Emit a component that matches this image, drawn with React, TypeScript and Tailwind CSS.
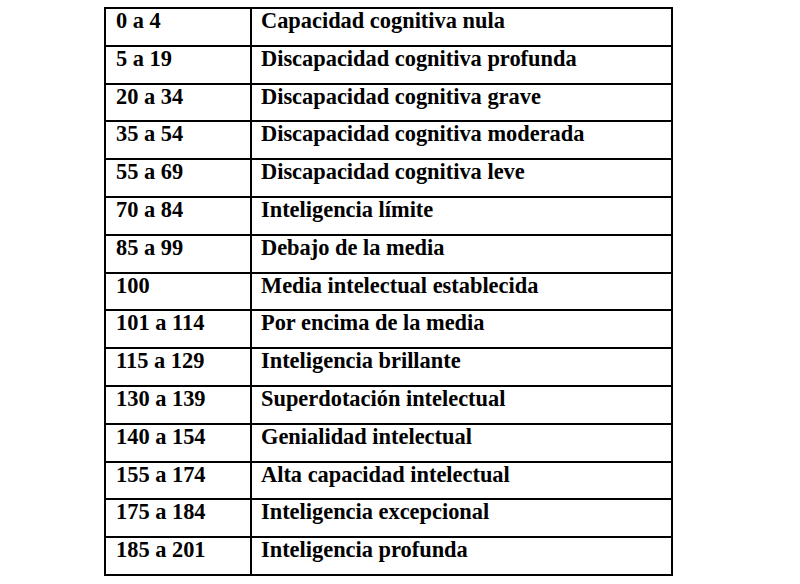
const rows: [string, string][] = [
  ["0 a 4", "Capacidad cognitiva nula"],
  ["5 a 19", "Discapacidad cognitiva profunda"],
  ["20 a 34", "Discapacidad cognitiva grave"],
  ["35 a 54", "Discapacidad cognitiva moderada"],
  ["55 a 69", "Discapacidad cognitiva leve"],
  ["70 a 84", "Inteligencia límite"],
  ["85 a 99", "Debajo de la media"],
  ["100", "Media intelectual establecida"],
  ["101 a 114", "Por encima de la media"],
  ["115 a 129", "Inteligencia brillante"],
  ["130 a 139", "Superdotación intelectual"],
  ["140 a 154", "Genialidad intelectual"],
  ["155 a 174", "Alta capacidad intelectual"],
  ["175 a 184", "Inteligencia excepcional"],
  ["185 a 201", "Inteligencia profunda"],
];

export default function App() {
  return (
    <div className="w-[800px] h-[584px] bg-white pt-[7px] pl-[104px]">
      <table className="border-collapse font-['Liberation_Serif',serif] font-bold text-[22.4px] text-black">
        <tbody>
          {rows.map(([range, label]) => (
            <tr key={range} className="h-[37.8px]">
              <td className="w-[146px] border-2 border-black pl-[10px] pr-[6px] pt-0 pb-[8px] align-top leading-[24px]">
                {range}
              </td>
              <td className="w-[421px] border-2 border-black pl-[9px] pr-[6px] pt-0 pb-[8px] align-top leading-[24px]">
                {label}
              </td>
            </tr>
          ))}
        </tbody>
      </table>
    </div>
  );
}
